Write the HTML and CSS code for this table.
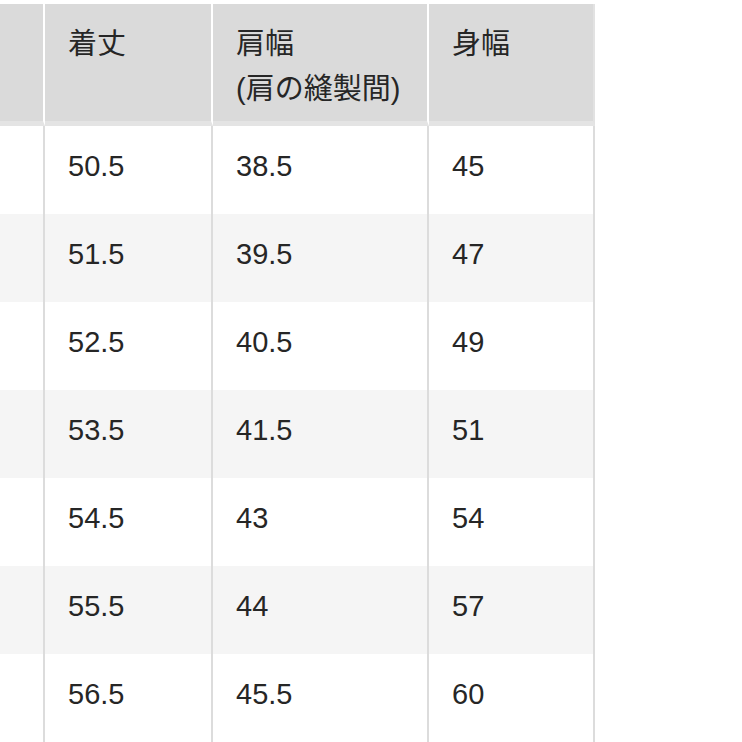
FILE: index.html
```html
<!DOCTYPE html>
<html lang="ja">
<head>
<meta charset="utf-8">
<title>サイズ表</title>
<link rel="stylesheet" href="styles.css">
</head>
<body>
<table class="size-table">
  <thead>
    <tr>
      <th class="c0"></th>
      <th class="c1">着丈</th>
      <th class="c2">肩幅<br>(肩の縫製間)</th>
      <th class="c3">身幅</th>
    </tr>
  </thead>
  <tbody>
    <tr><td class="c0"></td><td>50.5</td><td>38.5</td><td>45</td></tr>
    <tr class="alt"><td class="c0"></td><td>51.5</td><td>39.5</td><td>47</td></tr>
    <tr><td class="c0"></td><td>52.5</td><td>40.5</td><td>49</td></tr>
    <tr class="alt"><td class="c0"></td><td>53.5</td><td>41.5</td><td>51</td></tr>
    <tr><td class="c0"></td><td>54.5</td><td>43</td><td>54</td></tr>
    <tr class="alt"><td class="c0"></td><td>55.5</td><td>44</td><td>57</td></tr>
    <tr><td class="c0"></td><td>56.5</td><td>45.5</td><td>60</td></tr>
  </tbody>
</table>
</body>
</html>
```

FILE: styles.css
```css
html, body {
  margin: 0;
  padding: 0;
  background: #ffffff;
  overflow: hidden;
}

body {
  padding-top: 4px;
  font-family: "Liberation Sans", "Noto Sans CJK JP", sans-serif;
  color: #262626;
}

.size-table {
  border-collapse: separate;
  border-spacing: 0;
  table-layout: fixed;
  width: 595px;
}

.size-table th,
.size-table td {
  text-align: left;
  vertical-align: top;
  padding: 0 0 0 23px;
  border-right: 2px solid #dcdcdc;
  font-weight: normal;
  box-sizing: border-box;
}

.size-table th {
  background: #dadada;
  height: 122px;
  padding-top: 18px;
  font-size: 29px;
  line-height: 45px;
  border-right-color: #ffffff;
  border-bottom: 5px solid #e4e4e4;
}

.size-table th.c3 {
  border-right-color: #e2e2e2;
}

.size-table td {
  height: 88px;
  padding-top: 23px;
  font-size: 29px;
  line-height: 34px;
  background: #ffffff;
}

.size-table tr.alt td {
  background: #f5f5f5;
}

.c0 { width: 45px; }
.c1 { width: 168px; }
.c2 { width: 216px; }
.c3 { width: 166px; }
```
